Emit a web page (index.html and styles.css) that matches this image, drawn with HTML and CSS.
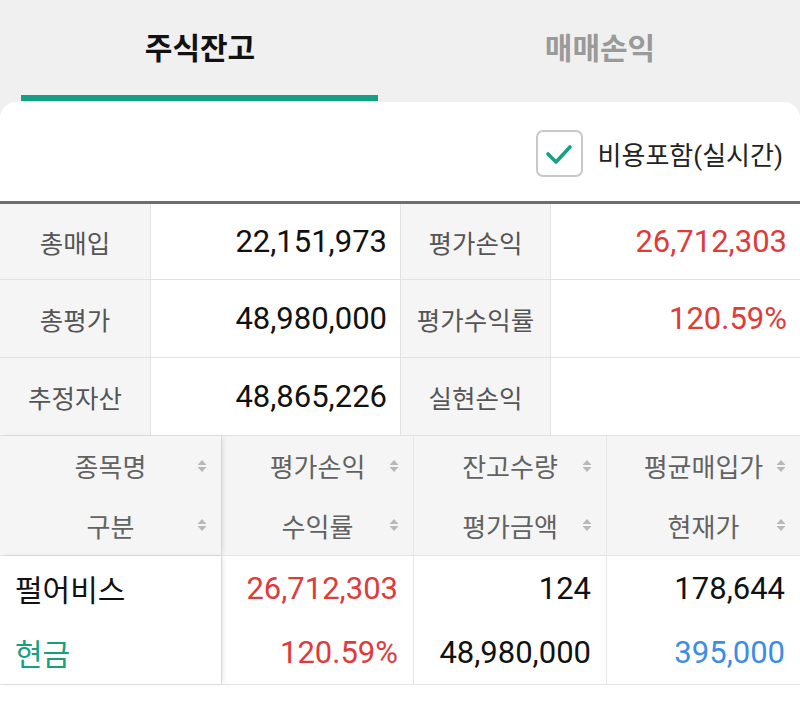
FILE: index.html
```html
<!DOCTYPE html>
<html lang="ko">
<head>
<meta charset="utf-8">
<title>주식잔고</title>
<link rel="stylesheet" href="styles.css">
</head>
<body>
<div class="tabs">
  <div class="tab active">주식잔고</div>
  <div class="tab">매매손익</div>
</div>
<div class="card">
  <div class="opt">
    <label class="chk">
      <span class="box"><svg width="30" height="24" viewBox="0 0 30 24"><path d="M4 12 L12 20 L26 5" fill="none" stroke="#16a085" stroke-width="3.6" stroke-linecap="round" stroke-linejoin="round"/></svg></span>
      <span class="chk-text">비용포함(실시간)</span>
    </label>
  </div>
  <div class="summary">
    <div class="lab">총매입</div><div class="val">22,151,973</div>
    <div class="lab">평가손익</div><div class="val red">26,712,303</div>
    <div class="lab">총평가</div><div class="val">48,980,000</div>
    <div class="lab">평가수익률</div><div class="val red">120.59%</div>
    <div class="lab">추정자산</div><div class="val">48,865,226</div>
    <div class="lab">실현손익</div><div class="val"></div>
  </div>
  <div class="grid head">
    <div class="col first">
      <div class="hl">종목명<svg class="sort" width="10" height="14" viewBox="0 0 10 14"><path d="M0.5 6 L5 1 L9.5 6 Z M0.5 8 L9.5 8 L5 13 Z" fill="#b8b8b8"/></svg></div>
      <div class="hl">구분<svg class="sort" width="10" height="14" viewBox="0 0 10 14"><path d="M0.5 6 L5 1 L9.5 6 Z M0.5 8 L9.5 8 L5 13 Z" fill="#b8b8b8"/></svg></div>
    </div>
    <div class="col">
      <div class="hl">평가손익<svg class="sort" width="10" height="14" viewBox="0 0 10 14"><path d="M0.5 6 L5 1 L9.5 6 Z M0.5 8 L9.5 8 L5 13 Z" fill="#b8b8b8"/></svg></div>
      <div class="hl">수익률<svg class="sort" width="10" height="14" viewBox="0 0 10 14"><path d="M0.5 6 L5 1 L9.5 6 Z M0.5 8 L9.5 8 L5 13 Z" fill="#b8b8b8"/></svg></div>
    </div>
    <div class="col">
      <div class="hl">잔고수량<svg class="sort" width="10" height="14" viewBox="0 0 10 14"><path d="M0.5 6 L5 1 L9.5 6 Z M0.5 8 L9.5 8 L5 13 Z" fill="#b8b8b8"/></svg></div>
      <div class="hl">평가금액<svg class="sort" width="10" height="14" viewBox="0 0 10 14"><path d="M0.5 6 L5 1 L9.5 6 Z M0.5 8 L9.5 8 L5 13 Z" fill="#b8b8b8"/></svg></div>
    </div>
    <div class="col">
      <div class="hl">평균매입가<svg class="sort" width="10" height="14" viewBox="0 0 10 14"><path d="M0.5 6 L5 1 L9.5 6 Z M0.5 8 L9.5 8 L5 13 Z" fill="#b8b8b8"/></svg></div>
      <div class="hl">현재가<svg class="sort" width="10" height="14" viewBox="0 0 10 14"><path d="M0.5 6 L5 1 L9.5 6 Z M0.5 8 L9.5 8 L5 13 Z" fill="#b8b8b8"/></svg></div>
    </div>
  </div>
  <div class="grid body">
    <div class="col first">
      <div class="dl name">펄어비스</div>
      <div class="dl name green">현금</div>
    </div>
    <div class="col">
      <div class="dl red">26,712,303</div>
      <div class="dl red">120.59%</div>
    </div>
    <div class="col">
      <div class="dl">124</div>
      <div class="dl">48,980,000</div>
    </div>
    <div class="col">
      <div class="dl">178,644</div>
      <div class="dl blue">395,000</div>
    </div>
  </div>
</div>
</body>
</html>
```

FILE: styles.css
```css
* { box-sizing: border-box; }
html, body { margin: 0; padding: 0; }
body {
  background: #f0f0f0;
  font-family: Roboto, "Noto Sans CJK KR", sans-serif;
  color: #111;
  height: 720px;
  overflow: hidden;
}
.tabs {
  display: flex;
  height: 102px;
}
.tab {
  flex: 1;
  position: relative;
  text-align: center;
  font-size: 30px;
  font-weight: 700;
  color: #9a9a9a;
  padding-top: 28px;
  line-height: 42px;
}
.tab.active { color: #111; }
.tab.active::after {
  content: "";
  position: absolute;
  left: 21px;
  right: 22px;
  bottom: 1px;
  height: 6px;
  background: #14a083;
}
.card {
  background: #fff;
  border-radius: 16px 16px 0 0;
  height: 618px;
}
.opt {
  height: 99px;
  display: flex;
  justify-content: flex-end;
  align-items: center;
  padding-right: 17px;
  padding-top: 4px;
}
.chk {
  display: flex;
  align-items: center;
  gap: 15px;
}
.box {
  width: 47px;
  height: 47px;
  border: 2px solid #c9c9c9;
  border-radius: 7px;
  display: flex;
  align-items: center;
  justify-content: center;
}
.chk-text {
  font-size: 26px;
  color: #222;
}
.summary {
  border-top: 3px solid #6e6e6e;
  border-bottom: 1px solid #e2e2e2;
  display: grid;
  grid-template-columns: 150px 249px 149px 249px;
  grid-template-rows: 75px 77px 77px;
  gap: 1px;
  background: #e2e2e2;
}
.lab {
  background: #f5f5f5;
  color: #555;
  font-size: 25.5px;
  display: flex;
  align-items: center;
  justify-content: center;
}
.val {
  background: #fff;
  font-size: 31px;
  display: flex;
  align-items: center;
  justify-content: flex-end;
  padding-right: 13px;
  color: #111;
}
.red { color: #e03b3b; }
.blue { color: #3c8de4; }
.green { color: #17a07f; }
.grid {
  display: grid;
  grid-template-columns: 221px 192px 193px 194px;
  border-bottom: 1px solid #e4e4e4;
}
.col {
  border-left: 1px solid #e6e6e6;
  display: flex;
  flex-direction: column;
}
.col.first {
  border-left: none;
  position: relative;
  z-index: 1;
  box-shadow: 3px 0 5px -1px rgba(0, 0, 0, 0.10);
}
.head { background: #f5f5f5; }
.head .col.first { background: #f5f5f5; }
.hl {
  position: relative;
  height: 59px;
  display: flex;
  align-items: center;
  justify-content: center;
  font-size: 26px;
  color: #626262;
}
.hl + .hl { height: 60px; }
.sort {
  position: absolute;
  right: 14px;
  top: 50%;
  margin-top: -7px;
}
.body { background: #fff; }
.body .col.first { background: #fff; }
.dl {
  height: 64px;
  display: flex;
  align-items: center;
  justify-content: flex-end;
  padding-right: 15px;
  font-size: 31px;
}
.dl.name {
  justify-content: flex-start;
  padding-left: 15px;
  padding-right: 0;
  font-size: 30px;
}
```
